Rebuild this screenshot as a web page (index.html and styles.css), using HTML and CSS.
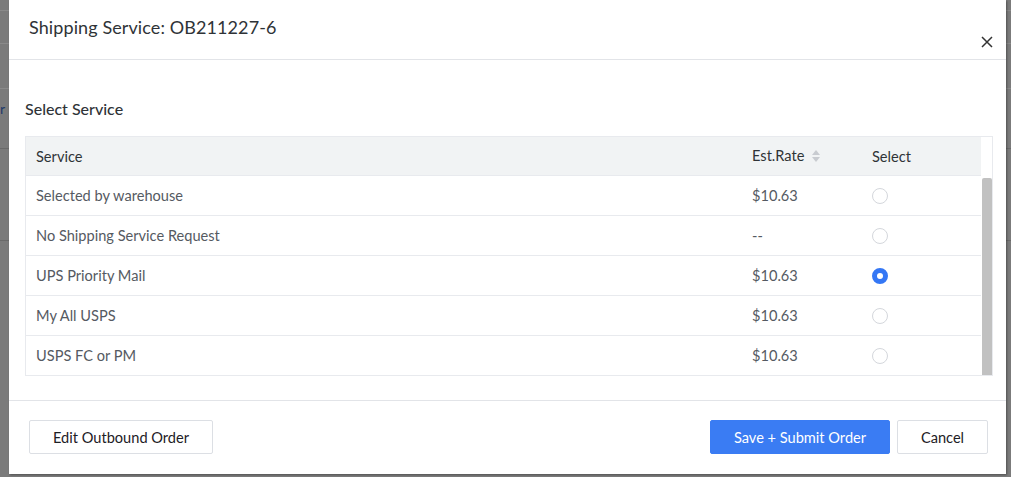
FILE: index.html
```html
<!DOCTYPE html>
<html>
<head>
<meta charset="utf-8">
<link rel="stylesheet" href="styles.css">
</head>
<body>
<div class="backdrop">
  <div class="page-peek">r</div>
  <div class="modal">
    <div class="modal-header">
      <h1 class="modal-title">Shipping Service: OB211227-6</h1>
      <button class="close" aria-label="Close">
        <svg width="12" height="12" viewBox="0 0 12 12"><path d="M1 1L11 11M11 1L1 11" stroke="#333" stroke-width="1.5" fill="none"/></svg>
      </button>
    </div>
    <div class="modal-body">
      <h2 class="section-title">Select Service</h2>
      <div class="table-wrap">
        <div class="table-scroll">
          <table class="svc-table">
            <thead>
              <tr>
                <th class="c-service">Service</th>
                <th class="c-rate">Est.Rate
                  <svg class="sort" width="10" height="14" viewBox="0 0 10 14"><path d="M5 1L9 6H1Z" fill="#c8cbd0"/><path d="M5 13L9 8H1Z" fill="#c8cbd0"/></svg>
                </th>
                <th class="c-select">Select</th>
              </tr>
            </thead>
            <tbody>
              <tr><td>Selected by warehouse</td><td>$10.63</td><td><span class="radio"></span></td></tr>
              <tr><td>No Shipping Service Request</td><td>--</td><td><span class="radio"></span></td></tr>
              <tr><td>UPS Priority Mail</td><td>$10.63</td><td><span class="radio checked"></span></td></tr>
              <tr><td>My All USPS</td><td>$10.63</td><td><span class="radio"></span></td></tr>
              <tr><td>USPS FC or PM</td><td>$10.63</td><td><span class="radio"></span></td></tr>
            </tbody>
          </table>
          <div class="gutter"><div class="thumb"></div></div>
        </div>
      </div>
    </div>
    <div class="modal-footer">
      <button class="btn btn-default">Edit Outbound Order</button>
      <div class="footer-right">
        <button class="btn btn-primary">Save + Submit Order</button>
        <button class="btn btn-default btn-cancel">Cancel</button>
      </div>
    </div>
  </div>
</div>
</body>
</html>
```

FILE: styles.css
```css
* { box-sizing: border-box; }
html, body { margin: 0; padding: 0; }
body {
  width: 1011px;
  height: 477px;
  overflow: hidden;
  font-family: Lato, "Open Sans", "Noto Sans", sans-serif;
  background: #7b7b7b;
}
.backdrop {
  position: relative;
  width: 1011px;
  height: 477px;
  padding-left: 9px;
  background:
    linear-gradient(#8a8a8a, #8a8a8a) 0 10px / 100% 1px no-repeat,
    linear-gradient(#8a8a8a, #8a8a8a) 0 43px / 100% 1px no-repeat,
    linear-gradient(#8a8a8a, #8a8a8a) 0 88px / 100% 1px no-repeat,
    linear-gradient(#6a6a6a, #6a6a6a) 0 148px / 100% 1px no-repeat,
    linear-gradient(#6a6a6a, #6a6a6a) 0 240px / 100% 1px no-repeat,
    #7b7b7b;
}
.page-peek {
  position: absolute;
  left: 0;
  top: 100px;
  font-size: 14px;
  color: #1f3a6a;
}
.modal {
  position: relative;
  width: 997px;
  height: 474px;
  background: #fff;
  display: flex;
  flex-direction: column;
  box-shadow: 1px 1px 2px rgba(0,0,0,0.35);
}
.modal-header {
  height: 60px;
  border-bottom: 1px solid #e2e4e8;
  display: flex;
  align-items: flex-start;
  justify-content: space-between;
  padding: 0 13px 0 20px;
}
.modal-title {
  margin: 16px 0 0;
  font-size: 18px;
  font-weight: 400;
  color: #2f3337;
  letter-spacing: 0.1px;
}
.close {
  margin-top: 36px;
  border: 0;
  background: none;
  padding: 0;
  width: 12px;
  height: 12px;
  display: flex;
}
.modal-body {
  padding: 0 13px 0 16px;
  flex: 0 0 auto;
  height: 341px;
  border-bottom: 1px solid #e2e4e8;
}
.section-title {
  margin: 39px 0 0;
  font-size: 16px;
  font-weight: 500;
  color: #2f3337;
  height: 37px;
  line-height: 20px;
}
.table-wrap {
  border: 1px solid #e8eaee;
  width: 968px;
  height: 240px;
  overflow: hidden;
}
.table-scroll {
  display: flex;
  height: 100%;
}
.svc-table {
  border-collapse: collapse;
  width: 955px;
  flex: 0 0 955px;
  font-size: 14.6px;
  color: #555a62;
  align-self: flex-start;
}
.svc-table th {
  background: #f1f3f4;
  height: 38px;
  text-align: left;
  font-weight: 400;
  color: #2f3337;
  padding: 1px 10px 0;
  border-bottom: 1px solid #e8eaee;
}
.svc-table td {
  height: 40px;
  padding: 0 10px;
  border-bottom: 1px solid #e8eaee;
}
.svc-table tbody tr:last-child td { border-bottom: 0; }
.c-service { width: 716px; }
.c-rate { width: 120px; }
.c-rate { padding-bottom: 2px !important; }
.sort { vertical-align: -2px; margin-left: 3px; }
.gutter {
  flex: 1;
  background: #fff;
  padding: 41px 0 0 1px;
}
.thumb {
  width: 10px;
  height: 198px;
  background: #c1c1c1;
  border-radius: 2px 2px 0 0;
}
.radio {
  display: inline-block;
  width: 16px;
  height: 16px;
  border: 1px solid #d4d7dc;
  border-radius: 50%;
  vertical-align: middle;
  background: #fff;
}
.radio.checked {
  background: #fff;
  border: 5px solid #3477f5;
}
.modal-footer {
  flex: 1;
  display: flex;
  align-items: flex-start;
  justify-content: space-between;
  padding: 19px 18px 0 20px;
}
.footer-right { display: flex; gap: 7px; }
.btn {
  height: 34px;
  font-family: Lato, "Open Sans", "Noto Sans", sans-serif;
  font-size: 14.6px;
  border-radius: 2px;
  cursor: pointer;
}
.btn-default {
  background: #fff;
  border: 1px solid #dcdfe4;
  color: #1d2025;
  width: 184px;
}
.btn-cancel { width: 91px; }
.btn-primary {
  background: #3a7cf3;
  border: 1px solid #3a7cf3;
  color: #fff;
  width: 180px;
}
```
